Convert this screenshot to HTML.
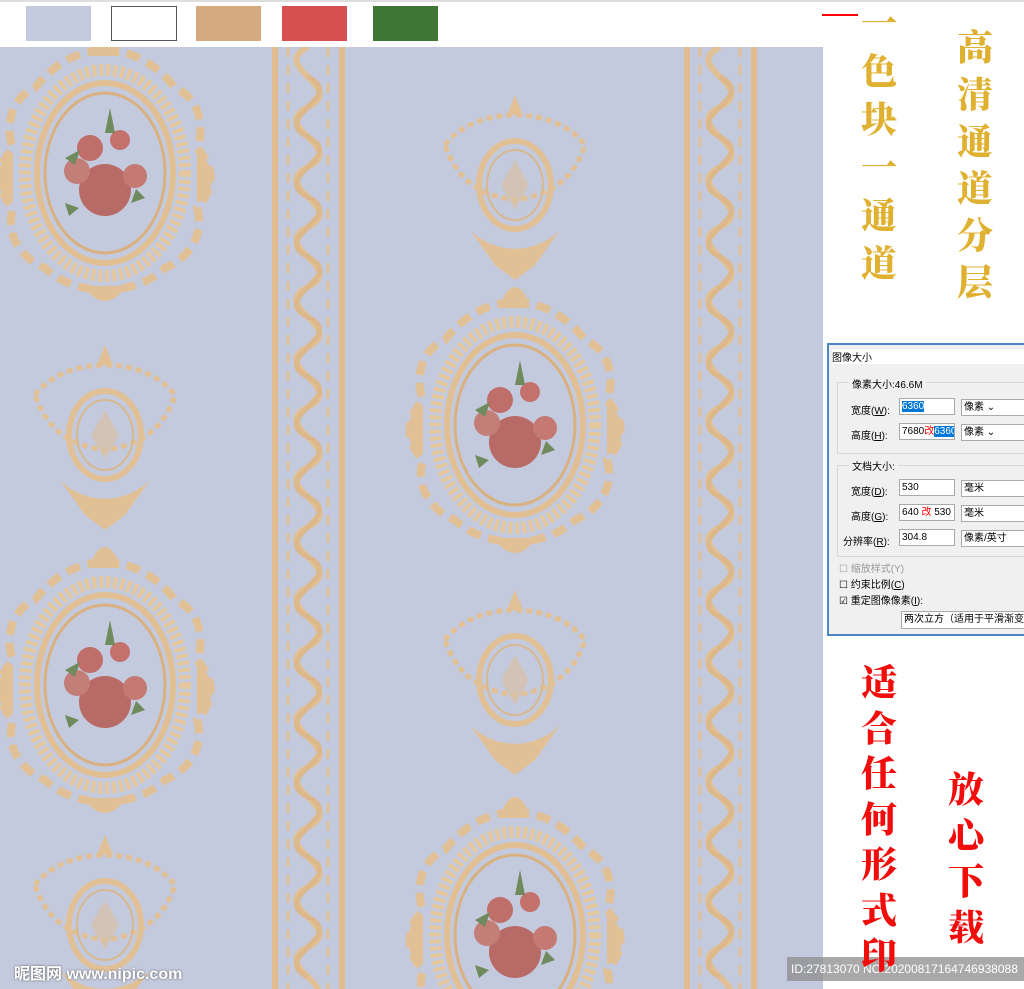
<!DOCTYPE html><html><head><meta charset="utf-8"><style>
body{margin:0;width:1024px;height:989px;overflow:hidden;background:#fff;position:relative;font-family:"Liberation Sans","Noto Sans CJK SC",sans-serif}
.sw{position:absolute;top:6px;width:65px;height:35px}
.v{position:absolute;font-family:"Noto Serif CJK SC","Noto Sans CJK SC",serif;font-weight:900;font-size:36px;line-height:1;width:44px;text-align:center}
.g{color:#e0b030}.r{color:#f20d0d}
.dlg{position:absolute;left:827px;top:343px;width:200px;height:293px;background:#f0f0f0;border:2px solid #4a86c8;box-sizing:border-box;font-size:10px;color:#000;overflow:hidden;white-space:nowrap}
.dlg .t{position:absolute;left:3px;top:4px;background:#fff;width:200px}
.fs{position:absolute;border:1px solid #d8d8d8}
.in{position:absolute;background:#fff;border:1px solid #aaa;height:17px;font-size:10px;line-height:15px;padding-left:2px;box-sizing:border-box;white-space:nowrap;overflow:hidden}
.lb{position:absolute;font-size:10px;white-space:nowrap}
</style></head><body>
<div style="position:absolute;left:0;top:0;width:1024px;height:2px;background:#ddd"></div>
<div class="sw" style="left:26px;background:#c4cadd"></div>
<div class="sw" style="left:111px;background:#fff;border:1px solid #555;box-sizing:border-box;width:66px"></div>
<div class="sw" style="left:196px;background:#d4aa80"></div>
<div class="sw" style="left:282px;background:#d65052"></div>
<div class="sw" style="left:373px;background:#3f7535"></div>
<div style="position:absolute;left:822px;top:14px;width:36px;height:2px;background:#f00"></div>
<svg style="position:absolute;left:0;top:47px" width="823" height="942" viewBox="0 47 823 942">
<defs>
<g id="big">
<path d="M0,-118 C30,-118 55,-100 70,-80 C95,-70 100,-40 92,-20 C110,0 110,20 92,40 C100,65 85,90 60,100 C45,115 20,122 0,122 C-20,122 -45,115 -60,100 C-85,90 -100,65 -92,40 C-110,20 -110,0 -92,-20 C-100,-40 -95,-70 -70,-80 C-55,-100 -30,-118 0,-118Z" fill="none" stroke="#e2c095" stroke-width="8" stroke-dasharray="14 8"/>
<ellipse cx="0" cy="5" rx="80" ry="103" fill="none" stroke="#e6c89e" stroke-width="12" stroke-dasharray="4 3"/>
<ellipse cx="0" cy="5" rx="68" ry="90" fill="none" stroke="#e2bf92" stroke-width="6"/>
<ellipse cx="0" cy="5" rx="60" ry="80" fill="none" stroke="#d9b080" stroke-width="3"/>
<path d="M-15,-112 C-8,-140 8,-140 15,-112Z M-92,-15 c-20,10 -20,40 0,50Z M92,-15 c20,10 20,40 0,50Z M-20,118 c10,20 30,20 40,0Z" fill="#e2c095"/>
<circle cx="-15" cy="-20" r="13" fill="#c06e6a"/><circle cx="15" cy="-28" r="10" fill="#c4716c"/>
<circle cx="0" cy="22" r="26" fill="#b86a66"/><circle cx="-28" cy="3" r="13" fill="#c47e78"/>
<circle cx="30" cy="8" r="12" fill="#c47a72"/>
<path d="M-40,-10 l15,-8 l-5,15Z M40,30 l-14,5 l5,-14Z M-40,35 l14,5 l-10,8Z M5,-60 l5,25 l-10,0Z" fill="#6f8a5c"/>
</g>
<g id="small">
<path d="M0,-90 l8,20 l-16,0Z" fill="#e2c095"/>
<path d="M-70,-40 C-40,-80 40,-80 70,-40 C60,-10 40,10 0,15 C-40,10 -60,-10 -70,-40Z" fill="none" stroke="#e2c095" stroke-width="5" stroke-dasharray="6 4"/>
<ellipse cx="0" cy="0" rx="36" ry="44" fill="none" stroke="#e2c095" stroke-width="6"/>
<ellipse cx="0" cy="0" rx="28" ry="35" fill="none" stroke="#d8b88e" stroke-width="2"/>
<path d="M0,-25 l14,25 l-14,25 l-14,-25Z" fill="#d9c0a5" opacity=".7"/>
<path d="M-45,45 C-20,70 20,70 45,45 L20,80 L0,95 L-20,80Z" fill="#e2c095"/>
</g>
<g id="stripe">
<rect x="0" y="47" width="6" height="942" fill="#e0bc8e"/>
<rect x="67" y="47" width="6" height="942" fill="#e0bc8e"/>
<path d="M36,47 c-40,20 40,40 0,60 c-40,20 40,40 0,60 c-40,20 40,40 0,60 c-40,20 40,40 0,60 c-40,20 40,40 0,60 c-40,20 40,40 0,60 c-40,20 40,40 0,60 c-40,20 40,40 0,60 c-40,20 40,40 0,60 c-40,20 40,40 0,60 c-40,20 40,40 0,60 c-40,20 40,40 0,60 c-40,20 40,40 0,60 c-40,20 40,40 0,60 c-40,20 40,40 0,60 c-40,20 40,40 0,60" fill="none" stroke="#e2c095" stroke-width="6"/>
<path d="M36,77 c40,20 -40,40 0,60 c40,20 -40,40 0,60 c40,20 -40,40 0,60 c40,20 -40,40 0,60 c40,20 -40,40 0,60 c40,20 -40,40 0,60 c40,20 -40,40 0,60 c40,20 -40,40 0,60 c40,20 -40,40 0,60 c40,20 -40,40 0,60 c40,20 -40,40 0,60 c40,20 -40,40 0,60 c40,20 -40,40 0,60 c40,20 -40,40 0,60 c40,20 -40,40 0,60" fill="none" stroke="#dcb88a" stroke-width="5"/>
<path d="M16,47 V989 M56,47 V989" stroke="#e2c095" stroke-width="3" stroke-dasharray="10 8"/>
</g>
</defs>
<rect x="0" y="47" width="823" height="942" fill="#c4cadd"/>
<use href="#stripe" x="272"/><use href="#stripe" x="684"/>
<use href="#big" x="105" y="168"/><use href="#big" x="105" y="680"/>
<use href="#big" x="515" y="420"/><use href="#big" x="515" y="930"/>
<use href="#small" x="105" y="435"/><use href="#small" x="105" y="925"/>
<use href="#small" x="515" y="185"/><use href="#small" x="515" y="680"/>
<rect x="816" y="47" width="7" height="942" fill="#c4cadd"/>
</svg>
<div style="position:absolute;left:14px;top:960px;color:#fff;font-size:16px;font-weight:bold;text-shadow:0 0 2px #555">昵图网 www.nipic.com</div>
<div style="position:absolute;left:787px;top:957px;width:237px;height:24px;background:rgba(140,140,140,.75);color:#fff;font-size:12px;line-height:24px;padding-left:4px;box-sizing:border-box;white-space:nowrap;overflow:hidden">ID:27813070 NO:20200817164746938088</div>

<div class="v g" style="left:857px;top:-2px;line-height:48px">一<br>色<br>块<br>一<br>通<br>道</div>
<div class="v g" style="left:953px;top:22px;line-height:47px">高<br>清<br>通<br>道<br>分<br>层</div>
<div class="v r" style="left:857px;top:658px;line-height:45.5px">适<br>合<br>任<br>何<br>形<br>式<br>印</div>
<div class="v r" style="left:944px;top:765px;line-height:46px">放<br>心<br>下<br>载</div>

<div class="dlg">
<div class="t">图像大小</div>
<div style="position:absolute;left:0;top:20px;width:200px;height:270px;background:#f0f0f0"></div>
<div class="fs" style="left:8px;top:37px;width:200px;height:70px"></div>
<div class="lb" style="left:20px;top:31px;background:#f0f0f0;padding:0 3px">像素大小:46.6M</div>
<div class="lb" style="left:22px;top:57px">宽度(<u>W</u>):</div>
<div class="in" style="left:70px;top:53px;width:56px"><span style="background:#0078d7;color:#fff">6360</span></div>
<div class="in" style="left:132px;top:54px;width:70px">像素 ⌄</div>
<div class="lb" style="left:22px;top:82px">高度(<u>H</u>):</div>
<div class="in" style="left:70px;top:78px;width:56px">7680<span style="color:red">改</span><span style="background:#0078d7;color:#fff">6360</span></div>
<div class="in" style="left:132px;top:79px;width:70px">像素 ⌄</div>
<div class="fs" style="left:8px;top:120px;width:200px;height:90px"></div>
<div class="lb" style="left:20px;top:113px;background:#f0f0f0;padding:0 3px">文档大小:</div>
<div class="lb" style="left:22px;top:138px">宽度(<u>D</u>):</div>
<div class="in" style="left:70px;top:134px;width:56px">530</div>
<div class="in" style="left:132px;top:135px;width:70px">毫米</div>
<div class="lb" style="left:22px;top:163px">高度(<u>G</u>):</div>
<div class="in" style="left:70px;top:159px;width:56px">640 <span style="color:red">改</span> 530</div>
<div class="in" style="left:132px;top:160px;width:70px">毫米</div>
<div class="lb" style="left:14px;top:188px">分辨率(<u>R</u>):</div>
<div class="in" style="left:70px;top:184px;width:56px">304.8</div>
<div class="in" style="left:132px;top:185px;width:70px">像素/英寸</div>
<div class="lb" style="left:10px;top:215px;color:#999">☐ 缩放样式(Y)</div>
<div class="lb" style="left:10px;top:231px">☐ 约束比例(<u>C</u>)</div>
<div class="lb" style="left:10px;top:247px">☑ 重定图像像素(<u>I</u>):</div>
<div class="in" style="left:72px;top:266px;width:130px;height:18px">两次立方（适用于平滑渐变</div>
</div>
</body></html>
